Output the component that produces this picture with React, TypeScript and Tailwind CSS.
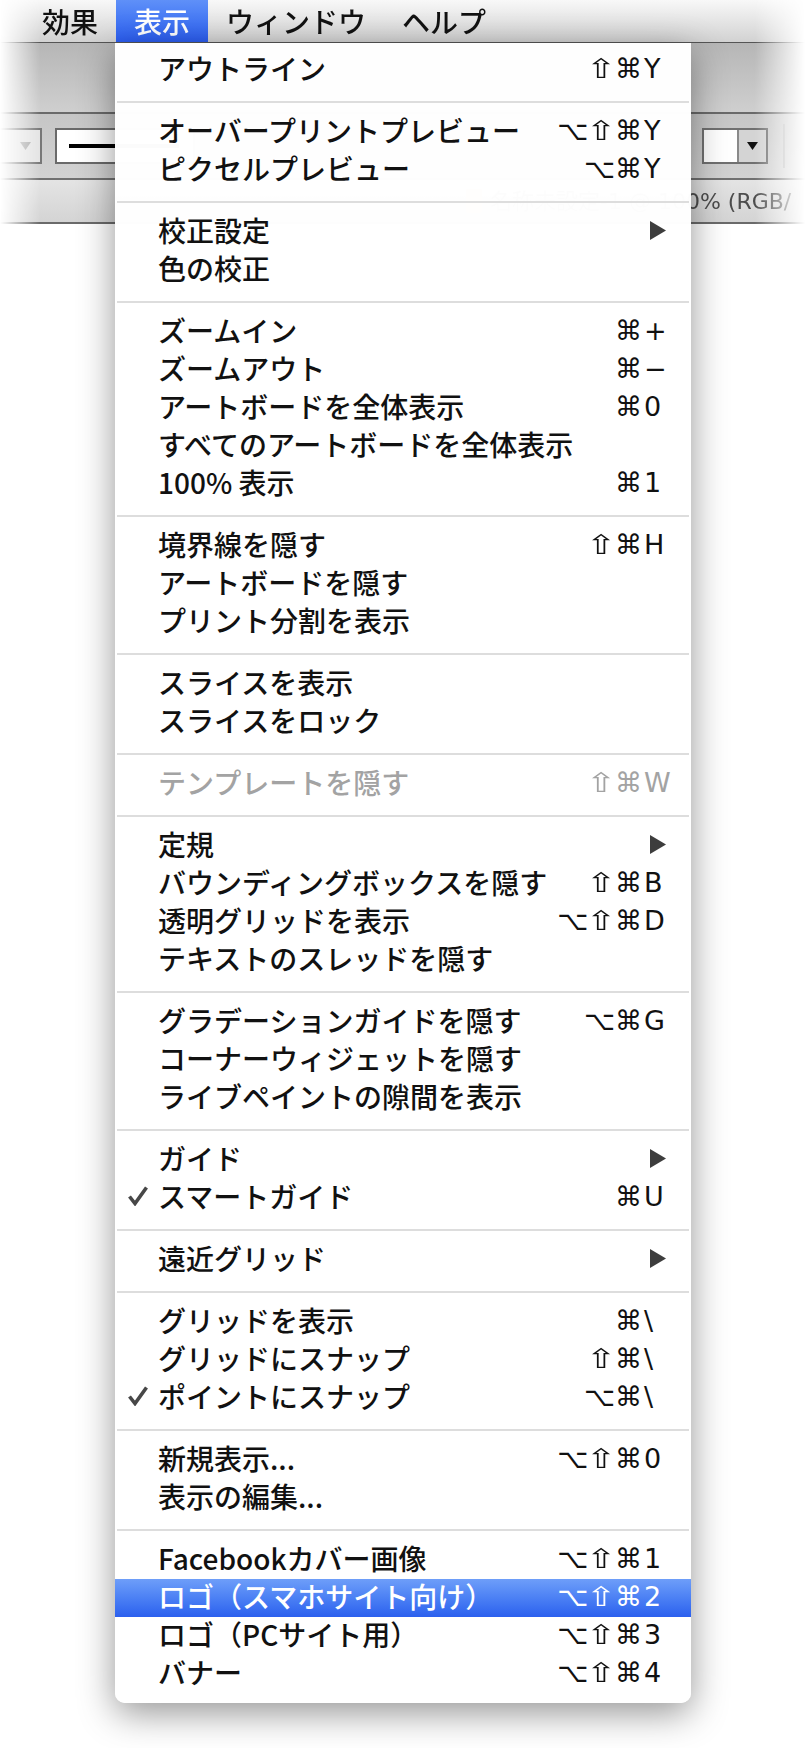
import clsx from "clsx";

type MenuItem = {
  label: string;
  mods?: string;
  keyChar?: string;
  submenu?: boolean;
  checked?: boolean;
  disabled?: boolean;
  active?: boolean;
};

const menuBar = ["効果", "表示", "ウィンドウ", "ヘルプ"];

const groups: MenuItem[][] = [
  [{ label: "アウトライン", mods: "⇧⌘", keyChar: "Y" }],
  [
    { label: "オーバープリントプレビュー", mods: "⌥⇧⌘", keyChar: "Y" },
    { label: "ピクセルプレビュー", mods: "⌥⌘", keyChar: "Y" },
  ],
  [{ label: "校正設定", submenu: true }, { label: "色の校正" }],
  [
    { label: "ズームイン", mods: "⌘", keyChar: "+" },
    { label: "ズームアウト", mods: "⌘", keyChar: "−" },
    { label: "アートボードを全体表示", mods: "⌘", keyChar: "0" },
    { label: "すべてのアートボードを全体表示" },
    { label: "100% 表示", mods: "⌘", keyChar: "1" },
  ],
  [
    { label: "境界線を隠す", mods: "⇧⌘", keyChar: "H" },
    { label: "アートボードを隠す" },
    { label: "プリント分割を表示" },
  ],
  [{ label: "スライスを表示" }, { label: "スライスをロック" }],
  [{ label: "テンプレートを隠す", mods: "⇧⌘", keyChar: "W", disabled: true }],
  [
    { label: "定規", submenu: true },
    { label: "バウンディングボックスを隠す", mods: "⇧⌘", keyChar: "B" },
    { label: "透明グリッドを表示", mods: "⌥⇧⌘", keyChar: "D" },
    { label: "テキストのスレッドを隠す" },
  ],
  [
    { label: "グラデーションガイドを隠す", mods: "⌥⌘", keyChar: "G" },
    { label: "コーナーウィジェットを隠す" },
    { label: "ライブペイントの隙間を表示" },
  ],
  [
    { label: "ガイド", submenu: true },
    { label: "スマートガイド", mods: "⌘", keyChar: "U", checked: true },
  ],
  [{ label: "遠近グリッド", submenu: true }],
  [
    { label: "グリッドを表示", mods: "⌘", keyChar: "\\" },
    { label: "グリッドにスナップ", mods: "⇧⌘", keyChar: "\\" },
    { label: "ポイントにスナップ", mods: "⌥⌘", keyChar: "\\", checked: true },
  ],
  [
    { label: "新規表示...", mods: "⌥⇧⌘", keyChar: "0" },
    { label: "表示の編集..." },
  ],
  [
    { label: "Facebookカバー画像", mods: "⌥⇧⌘", keyChar: "1" },
    { label: "ロゴ（スマホサイト向け）", mods: "⌥⇧⌘", keyChar: "2", active: true },
    { label: "ロゴ（PCサイト用）", mods: "⌥⇧⌘", keyChar: "3" },
    { label: "バナー", mods: "⌥⇧⌘", keyChar: "4" },
  ],
];

function CheckMark() {
  return (
    <svg width="20" height="20" viewBox="0 0 20 20" className="text-[#474747]">
      <path
        d="M1.5 10.5 L7 17.5 L18.5 1.5"
        fill="none"
        stroke="currentColor"
        strokeWidth="3.6"
        strokeLinejoin="miter"
      />
    </svg>
  );
}

function SubmenuArrow() {
  return (
    <svg width="16" height="19" viewBox="0 0 16 19" className="mr-[25px] text-[#3d3d3d]">
      <polygon points="0,0 16,9.5 0,19" fill="currentColor" />
    </svg>
  );
}

// the shift arrow in DejaVu is narrow, widen it to look like the mac glyph
function Mods({ text }: { text: string }) {
  return (
    <span className="flex items-center pr-[2px] font-['DejaVu_Sans',sans-serif]">
      {Array.from(text).map((ch, i) =>
        ch === "⇧" ? (
          <span key={i} className="inline-block px-[2px]">
            <span className="inline-block scale-x-[1.35]">⇧</span>
          </span>
        ) : (
          <span key={i}>{ch}</span>
        )
      )}
    </span>
  );
}

function Row({ item }: { item: MenuItem }) {
  return (
    <div
      className={clsx(
        "flex h-[38px] items-center pb-[4px]",
        item.active && "bg-linear-to-b from-[#6e9ef9] to-[#2b5fee] text-white",
        item.disabled && "text-[#a3a3a3]"
      )}
    >
      <div className="flex w-[43px] shrink-0 pl-[13px]">
        {item.checked && <CheckMark />}
      </div>
      <span className="flex-1 leading-none">{item.label}</span>
      {item.submenu && <SubmenuArrow />}
      {item.keyChar && (
        <div className="flex items-center pr-[20px] text-[27px] leading-none">
          <Mods text={item.mods ?? ""} />
          <span className="w-[27px] font-['DejaVu_Sans',sans-serif]">{item.keyChar}</span>
        </div>
      )}
    </div>
  );
}

function DropBox() {
  return (
    <div className="flex h-[36px] border-2 border-[#707070]">
      <div className="w-[33px] bg-white" />
      <div className="flex w-[29px] items-center justify-center border-l-2 border-[#8a8a8a] bg-[#d4d4d4]">
        <svg width="11" height="8" viewBox="0 0 11 8">
          <polygon points="0,0 11,0 5.5,8" fill="#111" />
        </svg>
      </div>
    </div>
  );
}

export default function App() {
  return (
    <div className="relative h-[1748px] w-[805px] overflow-hidden bg-white font-['Noto_Sans_CJK_JP',sans-serif] text-[28px] font-medium text-[#111]">
      <div className="[mask-image:linear-gradient(to_right,transparent,#000_40px,#000_755px,transparent_805px)]">
        <div className="flex h-[42px] bg-linear-to-b from-[#f8f8f8] to-[#d2d2d2] pl-[24px]">
          {menuBar.map((name) => (
            <div
              key={name}
              className={clsx(
                "flex items-center px-[18px] leading-none",
                name === "表示" && "bg-linear-to-b from-[#5f90f8] to-[#2b5cf0] text-white"
              )}
            >
              {name}
            </div>
          ))}
        </div>
        <div className="h-px bg-[#555]" />
        <div className="h-[69px] bg-linear-to-b from-[#b6b6b6] to-[#cfcfcf]" />
        <div className="h-[2px] bg-[#6a6a6a]" />
        <div className="flex h-[64px] items-center bg-linear-to-b from-[#c6c6c6] to-[#d2d2d2]">
          <div className="-ml-[2px] flex h-[36px] w-[44px] items-center justify-center border-2 border-[#777] bg-[#e4e4e4] pl-[10px]">
            <svg width="11" height="8" viewBox="0 0 11 8">
              <polygon points="0,0 11,0 5.5,8" fill="#aaa" />
            </svg>
          </div>
          <div className="ml-[13px] flex h-[36px] w-[140px] items-center border-2 border-[#6a6a6a] bg-white pl-[12px]">
            <div className="h-[4px] w-[110px] bg-black" />
          </div>
          <div className="ml-auto">
            <DropBox />
          </div>
          <div className="ml-[15px] h-[44px] w-[2px] bg-[#b5b5b5]" />
          <div className="w-[20px]" />
        </div>
        <div className="h-[2px] bg-[#707070]" />
        <div className="flex h-[42px] items-center bg-linear-to-b from-[#e4e4e4] to-[#d4d4d4] pl-[466px]">
          <div className="h-[24px] w-[16px] rounded-[2px] bg-[#e8a060]" />
          <span className="ml-[8px] whitespace-nowrap font-['DejaVu_Sans','Noto_Sans_CJK_JP',sans-serif] text-[22px] font-normal text-[#4d4d4d]">
            名称未設定-1 @ 100% (RGB/
          </span>
        </div>
        <div className="h-[2px] bg-[#6a6a6a]" />
      </div>

      <div className="absolute left-[115px] top-[43px] w-[576px] rounded-b-[10px] bg-white/[0.985] pb-[10px] pt-[8px] shadow-[0_10px_36px_rgba(0,0,0,0.42)]">
        {groups.map((group, gi) => (
          <div key={gi}>
            {gi > 0 && (
              <div className="flex h-[24px] items-center px-[2px] pt-[2px]">
                <div className="h-[2px] w-full bg-[#dddddd]" />
              </div>
            )}
            {group.map((item) => (
              <Row key={item.label} item={item} />
            ))}
          </div>
        ))}
      </div>
    </div>
  );
}
